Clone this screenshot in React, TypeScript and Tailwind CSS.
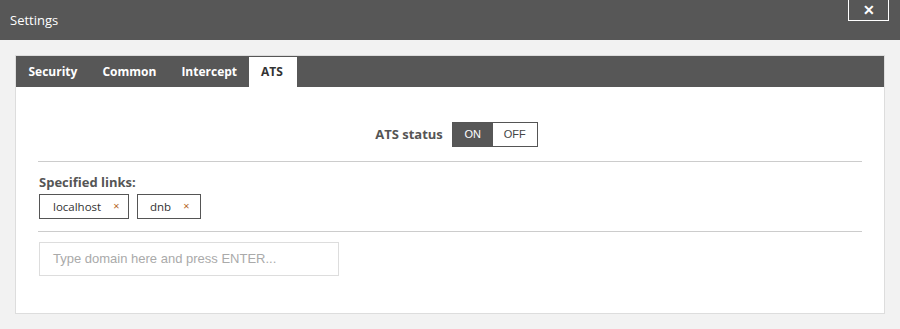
import React from "react";

export default function App() {
  const font = { fontFamily: '"Open Sans", "Noto Sans", sans-serif' };
  return (
    <div className="w-[900px] h-[329px] bg-[#f2f2f2] flex flex-col" style={font}>
      <div className="h-[40px] bg-[#575757] flex items-start justify-between shrink-0">
        <div className="text-white text-[13px] leading-[40px] pl-[10px]">Settings</div>
        <div className="mr-[11px] w-[41px] h-[21px] border border-t-0 border-white flex items-center justify-center text-white text-[14px] font-bold leading-none">
          ✕
        </div>
      </div>
      <div className="px-[15px] pt-[15px] pb-[15px] flex-1">
        <div className="w-[870px] h-[259px] bg-white border border-[#dddddd] flex flex-col">
          <div className="h-[31px] bg-[#575757] flex items-end pl-0">
            <div className="h-[31px] px-[12.5px] text-white font-bold text-[12px] flex items-center">Security</div>
            <div className="h-[31px] px-[12.5px] text-white font-bold text-[12px] flex items-center">Common</div>
            <div className="h-[31px] pl-[12.5px] pr-[12px] text-white font-bold text-[12px] flex items-center">Intercept</div>
            <div className="h-[30px] pl-[12px] pr-[14px] bg-white text-[#333] font-bold text-[12px] flex items-center">ATS</div>
          </div>
          <div className="px-[22px] flex flex-col">
            <div className="flex items-center justify-center gap-[9px] pt-[35px] pb-[14px] pl-[13px]">
              <span className="text-[#555] font-bold text-[13px]">ATS status</span>
              <div className="flex border border-[#555] h-[25px] text-[11px]" style={{ fontFamily: '"Liberation Sans", Arial, sans-serif' }}>
                <div className="w-[40px] bg-[#575757] text-white flex items-center justify-center">ON</div>
                <div className="w-[44px] bg-white text-[#444] flex items-center justify-center">OFF</div>
              </div>
            </div>
            <div className="h-px bg-[#cccccc]" />
            <div className="text-[#555] font-bold text-[13px] pt-[11px] leading-[18px] pl-px">Specified links:</div>
            <div className="flex gap-[8px] pt-[3px] pb-[12px] pl-px">
              <div className="h-[25px] w-[90px] border border-[#555] flex items-center pl-[13px] text-[11.5px] text-[#333]">
                <span>localhost</span>
                <span className="ml-[12px] text-[#b5651d] text-[11px]">×</span>
              </div>
              <div className="h-[25px] w-[64px] border border-[#555] flex items-center pl-[12px] text-[11.5px] text-[#333]">
                <span>dnb</span>
                <span className="ml-[12px] text-[#b5651d] text-[11px]">×</span>
              </div>
            </div>
            <div className="h-px bg-[#cccccc]" />
            <div className="pt-[10px] pl-px">
              <div
                className="w-[300px] h-[34px] border border-[#dddddd] flex items-center pl-[13px] text-[13px] text-[#aaaaaa]"
                style={{ fontFamily: '"Liberation Sans", Arial, sans-serif' }}
              >
                Type domain here and press ENTER...
              </div>
            </div>
          </div>
        </div>
      </div>
    </div>
  );
}
